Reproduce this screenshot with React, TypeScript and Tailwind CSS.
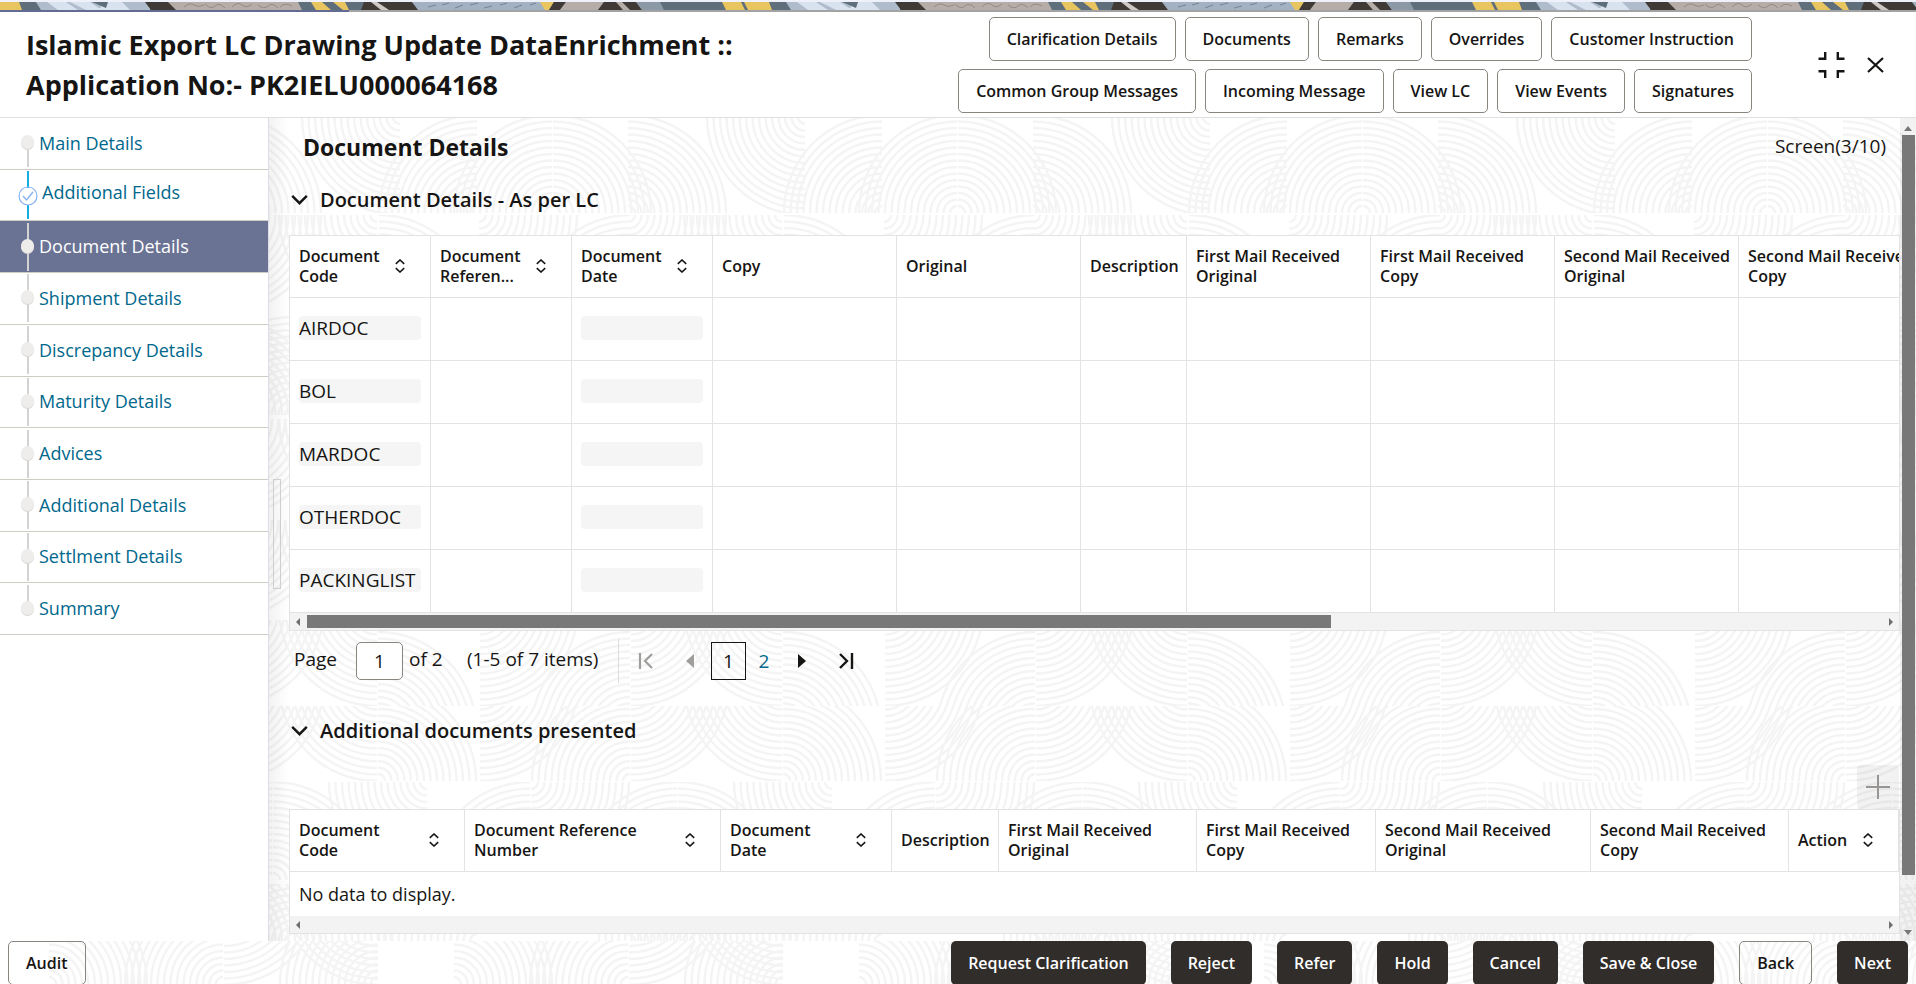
import React, { useState } from 'react';

const NAV_ITEMS = [
  'Main Details',
  'Additional Fields',
  'Document Details',
  'Shipment Details',
  'Discrepancy Details',
  'Maturity Details',
  'Advices',
  'Additional Details',
  'Settlment Details',
  'Summary',
];

const HEADER_ACTIONS = [
  ['Clarification Details', 'Documents', 'Remarks', 'Overrides', 'Customer Instruction'],
  ['Common Group Messages', 'Incoming Message', 'View LC', 'View Events', 'Signatures'],
];

interface Column {
  label: string;
  width: string;
  labelWidth?: string;
  sortable?: boolean;
}

const LC_COLUMNS: Column[] = [
  { label: 'Document Code', width: 'w-[141px]', labelWidth: 'w-[84px]', sortable: true },
  { label: 'Document Referen...', width: 'w-[141px]', labelWidth: 'w-[84px]', sortable: true },
  { label: 'Document Date', width: 'w-[141px]', labelWidth: 'w-[84px]', sortable: true },
  { label: 'Copy', width: 'w-[184px]' },
  { label: 'Original', width: 'w-[184px]' },
  { label: 'Description', width: 'w-[106px]' },
  { label: 'First Mail Received Original', width: 'w-[184px]' },
  { label: 'First Mail Received Copy', width: 'w-[184px]' },
  { label: 'Second Mail Received Original', width: 'w-[184px]' },
  { label: 'Second Mail Received Copy', width: 'w-[184px]' },
];

const PRESENTED_COLUMNS: Column[] = [
  { label: 'Document Code', width: 'w-[175px]', labelWidth: 'w-[84px]', sortable: true },
  { label: 'Document Reference Number', width: 'w-[256px]', sortable: true },
  { label: 'Document Date', width: 'w-[171px]', labelWidth: 'w-[84px]', sortable: true },
  { label: 'Description', width: 'w-[107px]' },
  { label: 'First Mail Received Original', width: 'w-[198px]' },
  { label: 'First Mail Received Copy', width: 'w-[179px]' },
  { label: 'Second Mail Received Original', width: 'w-[215px]' },
  { label: 'Second Mail Received Copy', width: 'w-[198px]' },
  { label: 'Action', width: '', sortable: true },
];

const DOCUMENT_CODES = ['AIRDOC', 'BOL', 'MARDOC', 'OTHERDOC', 'PACKINGLIST'];

// Background texture: quarter fans of concentric arcs, laid out in horizontal bands
type Quadrant = 'ul' | 'ur' | 'll' | 'lr';
type Fan = [number, number, Quadrant];

const TILE = 405;

interface Band {
  y: number;
  height: number;
  fans: Fan[];
}

const flowing = (up: number, down: number): Fan[] => [
  [225, up, 'ul'],
  [378, up, 'ur'],
  [75, down, 'lr'],
  [226, down, 'lr'],
  [377, down, 'll'],
];

const BANDS: Band[] = [
  { y: 117, height: 96, fans: [[147, 96, 'ul'], [148, 96, 'ur'], [72, 96, 'ul'], [223, 96, 'ur'], [400, 0, 'll']] },
  { y: 215, height: 98, fans: [[74, 0, 'lr'], [223, 0, 'lr'], [377, 0, 'll'], [379, 98, 'ur'], [225, 98, 'ul']] },
  { y: 315, height: 102, fans: [[292, 100, 'ul'], [293, 100, 'ur'], [72, 100, 'ul'], [223, 100, 'ur']] },
  { y: 419, height: 100, fans: flowing(100, 0) },
  { y: 520, height: 98, fans: flowing(98, 0) },
  { y: 620, height: 86, fans: flowing(110, -12) },
  { y: 706, height: 75, fans: flowing(75, -23) },
  { y: 782, height: 98, fans: [[125, 98, 'ul'], [126, 0, 'lr'], [272, 98, 'ul'], [273, 98, 'ur'], [22, 0, 'll']] },
  { y: 884, height: 57, fans: [[292, 57, 'ul'], [293, 57, 'ur'], [72, 57, 'ul'], [223, 57, 'ur']] },
  { y: 941, height: 43, fans: [[49, 43, 'ur'], [223, 43, 'ul'], [224, -54, 'lr'], [378, -54, 'll'], [378, 43, 'ul']] },
];

const RADII = Array.from({ length: 15 }, (_, i) => 7 + i * 6.5);

function arc([cx, cy, quadrant]: Fan, r: number) {
  switch (quadrant) {
    case 'ul':
      return `M${cx - r} ${cy}A${r} ${r} 0 0 1 ${cx} ${cy - r}`;
    case 'ur':
      return `M${cx} ${cy - r}A${r} ${r} 0 0 1 ${cx + r} ${cy}`;
    case 'lr':
      return `M${cx + r} ${cy}A${r} ${r} 0 0 1 ${cx} ${cy + r}`;
    default:
      return `M${cx} ${cy + r}A${r} ${r} 0 0 1 ${cx - r} ${cy}`;
  }
}

function Texture() {
  return (
    <svg className="absolute inset-0 w-full h-full" aria-hidden="true">
      <defs>
        <pattern id="texture" width={TILE} height={984} patternUnits="userSpaceOnUse">
          {BANDS.map((band) => (
            <svg key={band.y} y={band.y} width={TILE} height={band.height}>
              {[-TILE, 0, TILE].map((shift) => (
                <path
                  key={shift}
                  transform={`translate(${shift} 0)`}
                  d={band.fans.map((fan) => RADII.map((r) => arc(fan, r)).join('')).join('')}
                  fill="none"
                  stroke="#f4f4f4"
                  strokeWidth="2.4"
                />
              ))}
            </svg>
          ))}
        </pattern>
      </defs>
      <rect width="100%" height="100%" fill="url(#texture)" />
    </svg>
  );
}

function Banner() {
  return (
    <svg className="block w-full h-2" aria-hidden="true">
      <defs>
        <pattern id="banner" width="750" height="8" patternUnits="userSpaceOnUse">
          <rect width="750" height="8" fill="#5e6e7b" />
          <path d="M0 0H19L22 8H0z" fill="#e9c55f" />
          <path d="M36 0H150V8H41z" fill="#aebccb" />
          <path d="M47 0H66L78 8H58zM70 0H90L102 8H86zM106 0H122L130 8H98z" fill="#d9e2ef" />
          <path d="M92 0H108L106 6z" fill="#5e6e7b" />
          <path d="M145 0H170L177 8H151z" fill="#403a37" />
          <path d="M168 0H298L302 8H176z" fill="#b6ada8" />
          <path d="M184 5q6-5 10-2t10 0M205 2q6 6 10 2t10 2M232 5q6-6 10-2t10-1M258 3q6 5 10 1t10 2M280 5q5-5 12-1" fill="none" stroke="#938a85" />
          <path d="M311 0H322L331 8H316zM333 0H345L349 8H343z" fill="#e9c55f" />
          <path d="M364 0H412L421 8H361z" fill="#403a37" />
          <path d="M371 0H377L389 8H381z" fill="#cfc9c6" />
          <path d="M412 0H542L546 8H418z" fill="#a3b2c2" />
          <path d="M428 5l8-2M442 3l7-2M455 6l8-3M470 3l8-2M484 6l8-2M500 3l7-2M514 6l8-3M530 3l6-2" stroke="#74838f" />
          <path d="M540 0H554L549 8H545z" fill="#e9c55f" />
          <path d="M554 0H566L560 8H549z" fill="#403a37" />
          <path d="M566 0H604L598 8H560z" fill="#b6ada8" />
          <path d="M604 0H636L642 8H598z" fill="#403a37" />
          <path d="M616 0H622L630 8H623z" fill="#b6ada8" />
          <path d="M636 0H660L664 8H642z" fill="#8b99a6" />
          <path d="M722 0H750V8H726z" fill="#e9c55f" />
          <path d="M741 0H744L748 8H745z" fill="#5e6e7b" />
        </pattern>
      </defs>
      <rect width="100%" height="8" fill="url(#banner)" />
    </svg>
  );
}

function OutlineButton({ label }: { label: string }) {
  return (
    <button
      type="button"
      className="h-11 px-[17px] border border-[#8b8580] rounded-[5px] text-base font-semibold whitespace-nowrap"
    >
      {label}
    </button>
  );
}

function SolidButton({ label }: { label: string }) {
  return (
    <button
      type="button"
      className="h-11 px-[17px] bg-[#312d2a] rounded-[5px] text-base font-semibold text-white whitespace-nowrap"
    >
      {label}
    </button>
  );
}

function SortIcon() {
  return (
    <svg width="10" height="14" viewBox="0 0 10 14" fill="none" stroke="#161513" strokeWidth="1.6" aria-hidden="true">
      <path d="M.8 4.8 5 1l4.2 3.8M.8 9.2 5 13l4.2-3.8" />
    </svg>
  );
}

function HeaderCell({ column }: { column: Column }) {
  return (
    <th
      scope="col"
      className={`${column.width} h-[62px] pl-[9px] pr-1 pb-0.5 border-r border-b border-[#e3e3e3] text-left text-base leading-5 font-semibold`}
    >
      <div className="flex items-center justify-between">
        <span className={column.labelWidth}>{column.label}</span>
        {column.sortable && (
          <button type="button" aria-label={`Sort by ${column.label}`} className="mr-[21px]">
            <SortIcon />
          </button>
        )}
      </div>
    </th>
  );
}

function HorizontalScrollbar({ thumb }: { thumb?: boolean }) {
  return (
    <div className="flex items-center h-[17px] px-1 bg-[#f3f3f3]">
      <svg width="6" height="8" viewBox="0 0 6 8" className="mx-px shrink-0" aria-hidden="true">
        <path d="M5 0v8L1 4z" fill="#6e6e6e" />
      </svg>
      <div className="flex-1 px-[5px]">{thumb && <div className="h-[13px] w-[65%] bg-[#787878]" />}</div>
      <svg width="6" height="8" viewBox="0 0 6 8" className="mx-px shrink-0" aria-hidden="true">
        <path d="M1 0v8l4-4z" fill="#6e6e6e" />
      </svg>
    </div>
  );
}

function SectionHeading({ title }: { title: string }) {
  return (
    <h3 className="h-11 text-xl font-semibold">
      <button type="button" aria-expanded="true" className="h-full flex items-center gap-3 pl-0.5">
        <svg width="17" height="12" viewBox="0 0 17 12" fill="none" stroke="#161513" strokeWidth="2.4" aria-hidden="true">
          <path d="M1.2 1.8l7.3 7.4 7.3-7.4" />
        </svg>
        {title}
      </button>
    </h3>
  );
}

function StepMarker({ index }: { index: number }) {
  if (index === 1) {
    return (
      <svg width="20" height="48" viewBox="0 0 20 48" className="shrink-0" fill="none" aria-hidden="true">
        <path d="M10 0v17M10 34v14" stroke="#12afe0" strokeWidth="2" />
        <circle cx="10" cy="25" r="9" stroke="#86b4ee" strokeWidth="1.2" />
        <path d="M5 25l3.5 4L15 21" stroke="#86b4ee" strokeWidth="1.4" />
      </svg>
    );
  }

  const line = index === 0 ? 'M10 24v24' : index === NAV_ITEMS.length - 1 ? 'M10 0v24' : 'M10 0v48';
  return (
    <svg width="20" height="48" viewBox="0 0 20 48" className="shrink-0" fill="none" aria-hidden="true">
      <path d={line} stroke="#d3d3d3" strokeWidth="2" />
      <ellipse cx="9.5" cy="24" rx="6.5" ry="7" fill="#d9d8d6" />
      <ellipse cx="9.5" cy="23" rx="6.5" ry="7" fill="#eeedeb" />
    </svg>
  );
}

function Sidebar() {
  const [active, setActive] = useState(2);

  return (
    <nav className="relative w-[269px] shrink-0 bg-white border-r border-[#d9dfe5]">
      <ul className="grid auto-rows-fr h-[517px]">
        {NAV_ITEMS.map((item, index) => (
          <li
            key={item}
            className={`flex items-center border-b border-[#cfccc6] pl-[18px] ${index === active ? 'bg-[#6b7394]' : ''}`}
          >
            <StepMarker index={index} />
            <a
              href="#"
              onClick={() => setActive(index)}
              className={`text-lg ${index === 1 ? 'pl-1 pb-1.5' : 'pl-px pb-px'} ${index === active ? 'text-white' : 'text-[#00688c]'}`}
            >
              {item}
            </a>
          </li>
        ))}
      </ul>
    </nav>
  );
}

function Pagination() {
  const [page, setPage] = useState('1');

  return (
    <div className="flex items-center h-[60px] pl-[5px] text-[19px]">
      <label htmlFor="page" className="w-[62px] pb-1">Page</label>
      <input
        id="page"
        value={page}
        onChange={(e) => setPage(e.target.value)}
        className="w-[47px] h-[38px] bg-white border border-[#8b8580] rounded-[5px] text-center"
      />
      <span className="w-16 pl-1.5 pb-1">of 2</span>
      <span className="w-[151px] pb-1">(1-5 of 7 items)</span>
      <div className="flex items-center h-11 pl-[19px] border-l border-[#dcdcdc]">
        <button type="button" aria-label="First page" disabled>
          <svg width="16" height="18" viewBox="0 0 16 18" fill="none" stroke="#a09e9c" strokeWidth="2.2" aria-hidden="true">
            <path d="M2 1v16M14 2 7 9l7 7" />
          </svg>
        </button>
        <button type="button" aria-label="Previous page" disabled className="ml-8">
          <svg width="8" height="14" viewBox="0 0 8 14" aria-hidden="true">
            <path d="M8 0v14L0 7z" fill="#a09e9c" />
          </svg>
        </button>
        <button type="button" className="ml-[17px] w-[35px] h-[38px] border border-[#161513]">1</button>
        <button type="button" className="ml-3 w-3 text-[#00688c]">2</button>
        <button type="button" aria-label="Next page" className="ml-7">
          <svg width="8" height="14" viewBox="0 0 8 14" aria-hidden="true">
            <path d="M0 0v14l8-7z" fill="#161513" />
          </svg>
        </button>
        <button type="button" aria-label="Last page" className="ml-8">
          <svg width="16" height="18" viewBox="0 0 16 18" fill="none" stroke="#161513" strokeWidth="2.4" aria-hidden="true">
            <path d="M14 1v16M2 2l7 7-7 7" />
          </svg>
        </button>
      </div>
    </div>
  );
}

function LcTable() {
  return (
    <div className="border border-[#e3e3e3] bg-white">
      <div className="overflow-hidden">
        <table className="table-fixed w-[1633px] border-separate border-spacing-0">
          <thead>
            <tr>
              {LC_COLUMNS.map((column) => (
                <HeaderCell key={column.label} column={column} />
              ))}
            </tr>
          </thead>
          <tbody>
            {DOCUMENT_CODES.map((code) => (
              <tr key={code}>
                {LC_COLUMNS.map((column, index) => (
                  <td key={column.label} className="h-[63px] px-[9px] pb-0.5 border-r border-b border-[#e3e3e3]">
                    {index === 0 && (
                      <div className="h-6 rounded bg-[#f5f5f5] text-[19px] leading-6 whitespace-nowrap">{code}</div>
                    )}
                    {index === 2 && <div className="h-6 rounded bg-[#f5f5f5]" />}
                  </td>
                ))}
              </tr>
            ))}
          </tbody>
        </table>
      </div>
      <HorizontalScrollbar thumb />
    </div>
  );
}

function PresentedTable() {
  return (
    <div className="border border-[#e3e3e3] bg-white">
      <table className="table-fixed w-full border-separate border-spacing-0">
        <thead>
          <tr>
            {PRESENTED_COLUMNS.map((column) => (
              <HeaderCell key={column.label} column={column} />
            ))}
          </tr>
        </thead>
        <tbody>
          <tr>
            <td colSpan={PRESENTED_COLUMNS.length} className="h-11 px-[9px] text-lg">No data to display.</td>
          </tr>
        </tbody>
      </table>
      <HorizontalScrollbar />
    </div>
  );
}

export default function App() {
  return (
    <div className="relative h-screen flex flex-col overflow-hidden bg-white text-[#161513] font-['Open_Sans','Noto_Sans',sans-serif]">
      <Texture />

      <div className="relative pt-0.5 bg-[#eef1fa]">
        <Banner />
        <div className="h-0.5 bg-[#a3a3a3]">
          <div className="h-full w-[349px] bg-[#646b93]" />
        </div>
      </div>

      <header className="relative flex items-center h-[106px] pl-[26px] pr-8 bg-white border-b border-[#e0e0e0]">
        <h1 className="max-w-[740px] text-[27px] leading-10 font-bold">
          Islamic Export LC Drawing Update DataEnrichment :: Application No:- PK2IELU000064168
        </h1>
        <div className="flex-1 flex flex-col gap-2">
          {HEADER_ACTIONS.map((row) => (
            <div key={row[0]} className="flex justify-end gap-[9px]">
              {row.map((label) => (
                <OutlineButton key={label} label={label} />
              ))}
            </div>
          ))}
        </div>
        <div className="flex items-center gap-[22px] pl-[66px]">
          <button type="button" aria-label="Exit full screen">
            <svg width="27" height="26" viewBox="0 0 27 26" fill="none" stroke="#161513" strokeWidth="2.4" aria-hidden="true">
              <path d="M7.2 0v6.800H.5M19.8 0v6.800h6.700M7.2 26v-6.800H.5M19.8 26v-6.800h6.700" />
            </svg>
          </button>
          <button type="button" aria-label="Close">
            <svg width="17" height="16" viewBox="0 0 17 16" fill="none" stroke="#161513" strokeWidth="2.2" aria-hidden="true">
              <path d="M1 1l15 14M16 1 1 15" />
            </svg>
          </button>
        </div>
      </header>

      <div className="relative flex flex-1 min-h-0">
        <Sidebar />

        <main className="relative flex-1 min-w-0 flex overflow-hidden bg-linear-to-r from-black/5 to-transparent to-[20px]">
          <div className="absolute left-1 top-[361px] w-2 h-[110px] border border-[#cfcfcf]" />

          <div className="flex-1 min-w-0 pl-5">
            <div className="flex items-center justify-between h-[60px] pb-0.5 px-3.5">
              <h2 className="text-[23px] font-bold">Document Details</h2>
              <span className="pb-0.5 text-[19px]">Screen(3/10)</span>
            </div>

            <div className="mb-[13px]">
              <SectionHeading title="Document Details - As per LC" />
            </div>
            <LcTable />
            <Pagination />

            <div className="mt-[18px]">
              <SectionHeading title="Additional documents presented" />
            </div>
            <div className="flex justify-end mt-3 pr-px">
              <button type="button" aria-label="Add document" className="flex items-center justify-center w-[42px] h-11 rounded bg-black/5">
                <svg width="24" height="24" viewBox="0 0 24 24" fill="none" stroke="#989694" strokeWidth="2" aria-hidden="true">
                  <path d="M12 0v24M0 12h24" />
                </svg>
              </button>
            </div>
            <PresentedTable />
          </div>

          {/* Vertical scrollbar */}
          <div className="flex flex-col items-center w-4 shrink-0 py-1.5 bg-black/5">
            <svg width="8" height="5" viewBox="0 0 8 5" className="mt-0.5 shrink-0" aria-hidden="true">
              <path d="M0 5h8L4 0z" fill="#787878" />
            </svg>
            <div className="mt-1 h-[740px] w-[13px] bg-[#787878]" />
            <svg width="8" height="5" viewBox="0 0 8 5" className="mt-auto shrink-0" aria-hidden="true">
              <path d="M0 0h8L4 5z" fill="#787878" />
            </svg>
          </div>
        </main>
      </div>

      <footer className="relative flex items-start justify-between h-[43px] shrink-0 px-2">
        <OutlineButton label="Audit" />
        <div className="flex gap-[25px]">
          <SolidButton label="Request Clarification" />
          <SolidButton label="Reject" />
          <SolidButton label="Refer" />
          <SolidButton label="Hold" />
          <SolidButton label="Cancel" />
          <SolidButton label="Save &amp; Close" />
          <OutlineButton label="Back" />
          <SolidButton label="Next" />
        </div>
      </footer>
    </div>
  );
}
